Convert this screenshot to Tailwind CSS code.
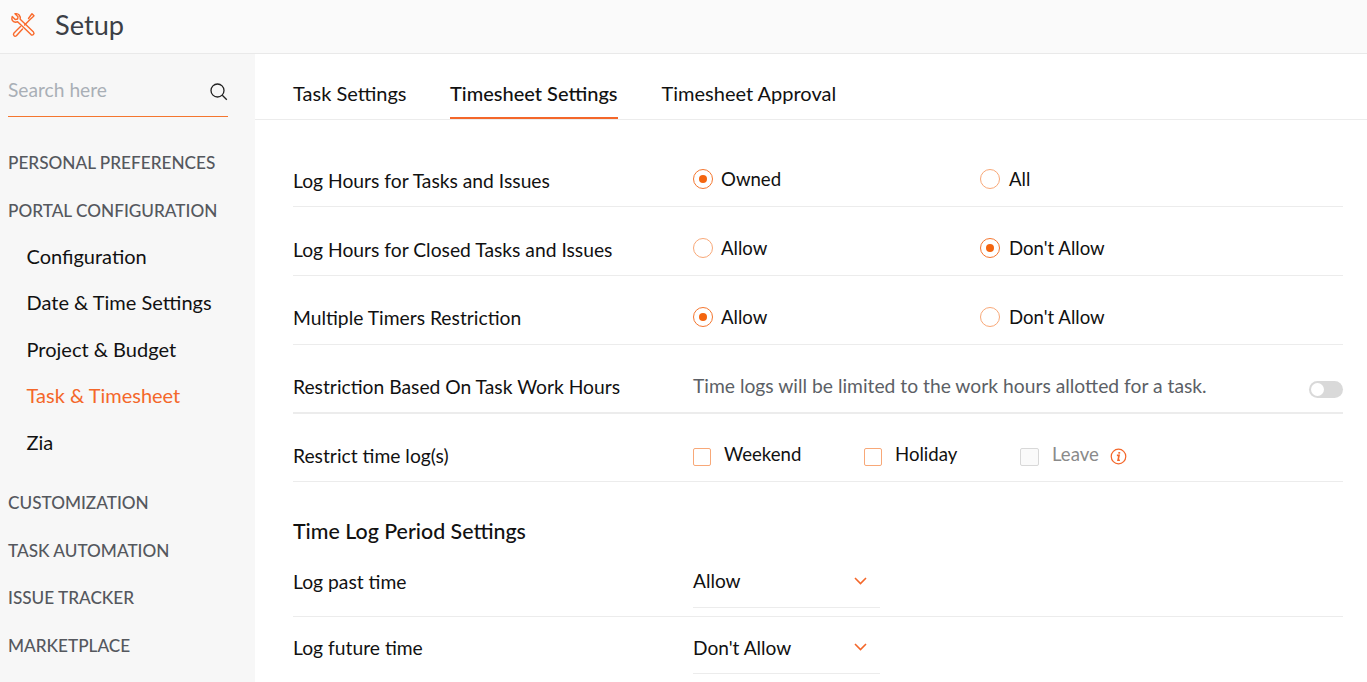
<!DOCTYPE html>
<html lang="en">
<head>
<meta charset="UTF-8">
<title>Setup</title>
<script src="https://cdn.jsdelivr.net/npm/@tailwindcss/browser@4"></script>
</head>
<body class="h-[682px] overflow-hidden bg-white font-['Lato',sans-serif] text-[19.27px] text-[#111]">
  <!-- top bar -->
  <header class="flex h-[54px] items-center border-b border-[#e9e9e9] bg-[#fafafa]">
    <svg class="mb-[4px] ml-[10px] h-[26px] w-[26px]" viewBox="0 0 26 26" fill="none" stroke="#f96a2c" stroke-width="1.4" stroke-linejoin="round" stroke-linecap="round">
      <path d="M5 1.800 8 4.800 7.600 7 5.200 7.600 2.200 4.600C1.200 7.400 2.500 10 5.400 10.200L7.600 9.800 21 22.600C22.600 24 25 21.800 23.500 20.100L10.200 7.300C10.800 4 8.600 1 5 1.800Z"/>
      <path d="M18.500 6.500 21 3 22 1.700 24 3.700 22.800 5 19.800 7.800 14.600 13"/>
      <path d="M10.500 14.500 4 21C2.500 22.800 4.500 25.200 6.400 23.800L12.500 17"/>
    </svg>
    <h1 class="mb-[4px] ml-[19px] text-[27.2px] leading-none text-[#3c3f46]">Setup</h1>
  </header>

  <div class="flex h-[628px]">
    <!-- sidebar -->
    <aside class="w-[255px] shrink-0 bg-[#f7f7f7] pl-2 pr-[27px]">
      <div class="mt-[17px] flex h-[46px] items-center justify-between border-b border-[#f4762f] pb-[6px]">
        <span class="text-[19.2px] text-[#a9afb6]">Search here</span>
        <svg class="mt-[2px] h-[19px] w-[19px]" viewBox="0 0 19 19" fill="none" stroke="#222" stroke-width="1.3"><circle cx="8.500" cy="8.500" r="6.500"/><path d="m13.300 13.300 4.500 4.500"/></svg>
      </div>
      <nav class="mt-[22px]">
        <div class="flex h-[48px] items-center text-[17.2px] font-medium text-[#55585e]">PERSONAL PREFERENCES</div>
        <div class="flex h-[48px] items-center text-[17.2px] font-medium text-[#55585e]">PORTAL CONFIGURATION</div>
        <div class="-mt-[2.500px] flex h-[46.500px] items-center pl-[18.500px] text-[20px]">Configuration</div>
        <div class="flex h-[46.500px] items-center pl-[18.500px] text-[20px]">Date &amp; Time Settings</div>
        <div class="flex h-[46.500px] items-center pl-[18.500px] text-[20px]">Project &amp; Budget</div>
        <div class="flex h-[46.500px] items-center pl-[18.500px] text-[20px] text-[#f4672a]">Task &amp; Timesheet</div>
        <div class="flex h-[46.500px] items-center pl-[18.500px] text-[20px]">Zia</div>
        <div class="mt-[13.500px] flex h-[48px] items-center text-[17.2px] font-medium text-[#55585e]">CUSTOMIZATION</div>
        <div class="flex h-[48px] items-center text-[17.2px] font-medium text-[#55585e]">TASK AUTOMATION</div>
        <div class="flex h-[47px] items-center text-[17.2px] font-medium text-[#55585e]">ISSUE TRACKER</div>
        <div class="flex h-[48px] items-center text-[17.2px] font-medium text-[#55585e]">MARKETPLACE</div>
      </nav>
    </aside>

    <!-- main -->
    <main class="min-w-0 flex-1">
      <div class="flex h-[66px] gap-[43.500px] border-b border-[#ececec] pl-[38px] text-[20px]">
        <div class="flex items-center pt-[12px]">Task Settings</div>
        <div class="flex w-[168px] items-center border-b-2 border-[#f4672a] pt-[14px] font-medium whitespace-nowrap">Timesheet Settings</div>
        <div class="flex items-center pt-[12px]">Timesheet Approval</div>
      </div>

      <div class="ml-[38px] mr-[24px] mt-[18px]">
        <div class="flex h-[69px] items-center border-b border-[#ececec] pt-[18px]">
          <div class="w-[400px]">Log Hours for Tasks and Issues</div>
          <label class="flex w-[287px] items-center gap-[8px] pb-[3px] text-[18.6px]">
            <span class="flex h-[20px] w-[20px] items-center justify-center rounded-full border border-[#f4762f]"><span class="h-[8px] w-[8px] rounded-full bg-[#f4650f]"></span></span>
            <span>Owned</span>
          </label>
          <label class="flex items-center gap-[9px] pb-[3px] text-[18.6px]">
            <span class="h-[20px] w-[20px] rounded-full border border-[#f8a878]"></span>
            <span>All</span>
          </label>
        </div>
        <div class="flex h-[69px] items-center border-b border-[#ececec] pt-[18px]">
          <div class="w-[400px]">Log Hours for Closed Tasks and Issues</div>
          <label class="flex w-[287px] items-center gap-[8px] pb-[3px] text-[18.6px]">
            <span class="h-[20px] w-[20px] rounded-full border border-[#f8a878]"></span>
            <span>Allow</span>
          </label>
          <label class="flex items-center gap-[9px] pb-[3px] text-[18.6px]">
            <span class="flex h-[20px] w-[20px] items-center justify-center rounded-full border border-[#f4762f]"><span class="h-[8px] w-[8px] rounded-full bg-[#f4650f]"></span></span>
            <span>Don't Allow</span>
          </label>
        </div>
        <div class="flex h-[69px] items-center border-b border-[#ececec] pt-[18px]">
          <div class="w-[400px] pb-[2px]">Multiple Timers Restriction</div>
          <label class="flex w-[287px] items-center gap-[8px] pb-[3px] text-[18.6px]">
            <span class="flex h-[20px] w-[20px] items-center justify-center rounded-full border border-[#f4762f]"><span class="h-[8px] w-[8px] rounded-full bg-[#f4650f]"></span></span>
            <span>Allow</span>
          </label>
          <label class="flex items-center gap-[9px] pb-[3px] text-[18.6px]">
            <span class="h-[20px] w-[20px] rounded-full border border-[#f8a878]"></span>
            <span>Don't Allow</span>
          </label>
        </div>
        <div class="flex h-[69px] items-center border-b-2 border-[#ececec] pt-[18px]">
          <div class="w-[400px]">Restriction Based On Task Work Hours</div>
          <div class="flex-1 pb-[2px] text-[#5c5f66]">Time logs will be limited to the work hours allotted for a task.</div>
          <span class="mt-[4px] flex h-[17px] w-[34px] items-center rounded-full bg-[#d9d9d9] pl-[2px]"><span class="h-[13px] w-[13px] rounded-full bg-white"></span></span>
        </div>
        <div class="flex h-[68px] items-center border-b border-[#ececec] pt-[18px]">
          <div class="w-[400px]">Restrict time log(s)</div>
          <label class="flex w-[171px] items-center gap-[13px] text-[18.6px]">
            <span class="mt-[2px] h-[18px] w-[18px] rounded-[2px] border border-[#f8a878]"></span>
            <span class="-mt-[4px]">Weekend</span>
          </label>
          <label class="flex w-[156px] items-center gap-[13px] text-[18.6px]">
            <span class="mt-[2px] h-[18px] w-[18px] rounded-[2px] border border-[#f8a878]"></span>
            <span class="-mt-[4px]">Holiday</span>
          </label>
          <label class="flex items-center text-[18.6px] text-[#8a8a8a]">
            <span class="mt-[2px] h-[18px] w-[19px] rounded-[2px] border border-[#d8d8d8] bg-[#fafafa]"></span>
            <span class="-mt-[4px] ml-[13px]">Leave</span>
            <svg class="ml-[11px] h-[17px] w-[17px]" viewBox="0 0 18 18" fill="none" stroke="#f4672a"><circle cx="9" cy="9" r="7.700" stroke-width="1.300"/><path d="M7.300 7.800h2.300L8.500 13h2" stroke-width="1.700"/><path d="M9.800 4.300v1.700" stroke-width="2"/></svg>
          </label>
        </div>

        <h2 class="mt-[36px] text-[21.4px] leading-[26px] font-medium">Time Log Period Settings</h2>

        <div class="flex h-[73px] items-start border-b border-[#ececec]">
          <div class="w-[400px] pt-[24px]">Log past time</div>
          <div class="flex h-[64px] w-[187px] items-center justify-between border-b border-[#ececec] pt-[11px] pr-[13px] text-[19.1px]">
            <span>Allow</span>
            <svg class="h-[8px] w-[13px]" viewBox="0 0 13 8" fill="none" stroke="#f4672a" stroke-width="1.600"><path d="m1 1 5.500 5.500L12 1"/></svg>
          </div>
        </div>
        <div class="flex h-[66px] items-start">
          <div class="w-[400px] pt-[17px]">Log future time</div>
          <div class="flex h-[57px] w-[187px] items-center justify-between border-b border-[#ececec] pt-[6px] pr-[13px] text-[19.1px]">
            <span>Don't Allow</span>
            <svg class="-mt-[2px] h-[8px] w-[13px]" viewBox="0 0 13 8" fill="none" stroke="#f4672a" stroke-width="1.600"><path d="m1 1 5.500 5.500L12 1"/></svg>
          </div>
        </div>
      </div>
    </main>
  </div>
</body>
</html>
